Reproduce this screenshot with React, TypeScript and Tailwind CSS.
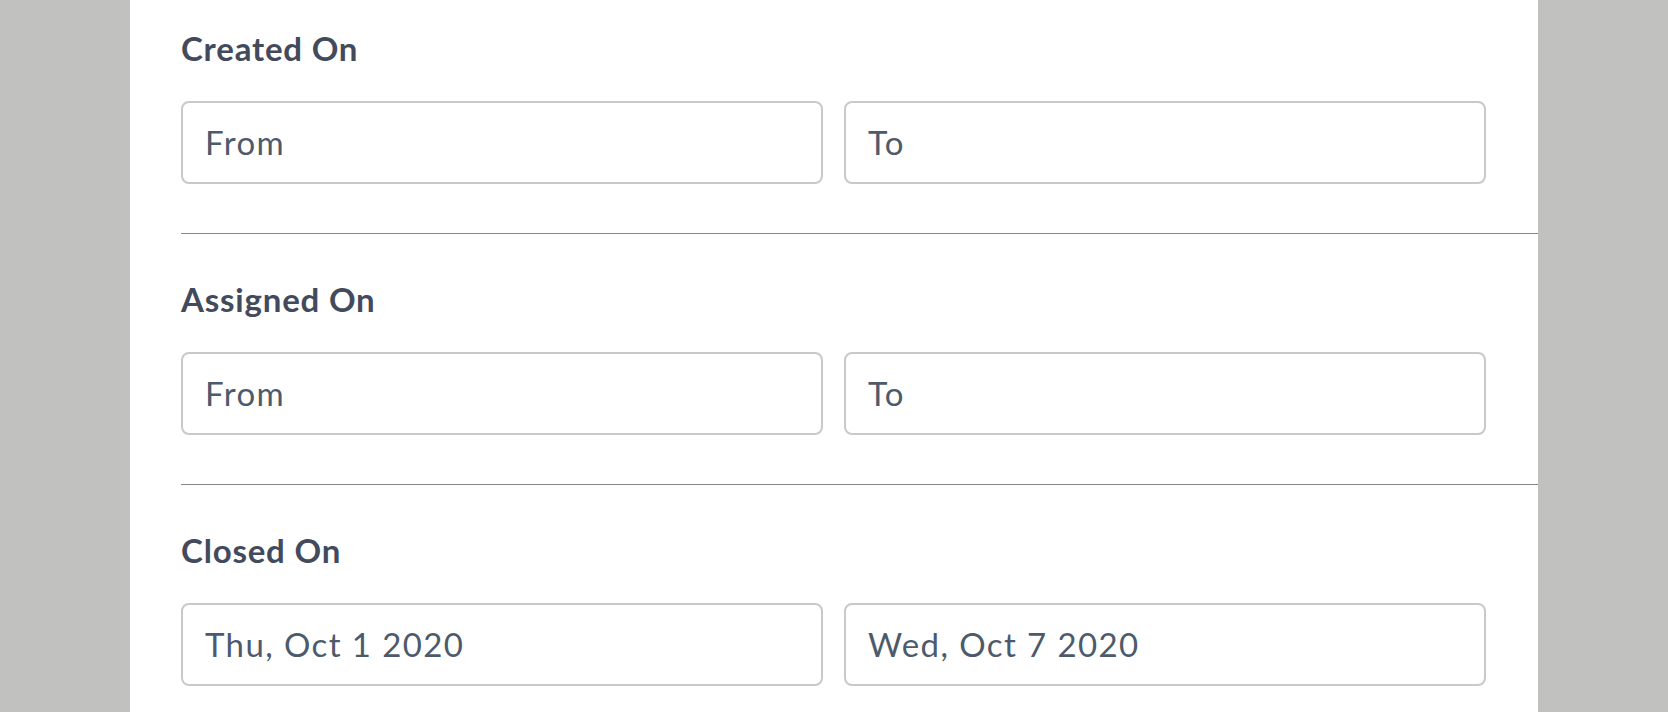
const sections = [
  { label: 'Created On', from: 'From', to: 'To' },
  { label: 'Assigned On', from: 'From', to: 'To' },
  { label: 'Closed On', from: 'Thu, Oct 1 2020', to: 'Wed, Oct 7 2020' },
];

function DateField({ value }: { value: string }) {
  return (
    <div className="flex-1 h-[83px] flex items-center pl-[22px] border-2 border-[#c9c9c9] rounded-[8px] bg-white text-[33px] tracking-[1.4px] text-[#4d5a6b]">
      {value}
    </div>
  );
}

export default function App() {
  return (
    <div
      className="w-[1668px] h-[712px] overflow-hidden bg-[#c1c2bf] flex"
      style={{ fontFamily: 'Lato, "Open Sans", sans-serif' }}
    >
      <div className="ml-[130px] w-[1408px] h-full bg-white pt-[28px] pl-[51px]">
        {sections.map((s, i) => (
          <div key={s.label}>
            {i > 0 && <div className="h-px bg-[#85878b] mb-[45px]" />}
            <h2 className="text-[33px] leading-[40px] font-bold tracking-[0.8px] text-[#434a5c]">{s.label}</h2>
            <div className="flex gap-[21px] pr-[52px] mt-[33px] mb-[49px]">
              <DateField value={s.from} />
              <DateField value={s.to} />
            </div>
          </div>
        ))}
      </div>
    </div>
  );
}
